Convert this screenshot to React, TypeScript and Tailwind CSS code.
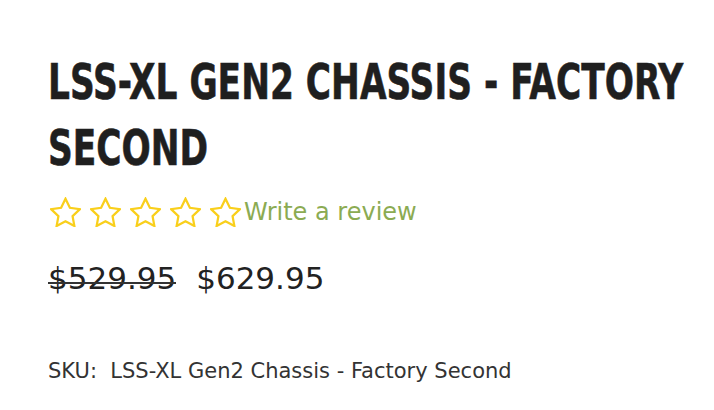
import React from 'react';

const bodyFont = { fontFamily: '"DejaVu Sans", Verdana, sans-serif' };

function StarOutline() {
  return (
    <svg width="31" height="30" viewBox="1.6 1.4 20.8 19.8" fill="none" aria-hidden="true">
      <path
        d="M12 2.4l2.94 6.1 6.7.9-4.9 4.65 1.22 6.65L12 17.5l-5.96 3.2 1.22-6.65L2.36 9.4l6.7-.9z"
        stroke="#f9cf1b"
        strokeWidth="1.5"
        strokeLinejoin="miter"
      />
    </svg>
  );
}

export default function App() {
  return (
    <div className="w-[714px] h-[410px] overflow-hidden bg-white pl-12 pt-[49px]">
      {/* titel: smal & vet, Oswald-achtig */}
      <h1
        className="w-[900px] origin-left scale-x-[0.765] text-[50px] leading-[66px] font-bold uppercase text-[#1f1f1f] [-webkit-text-stroke:0.6px_#1f1f1f]"
        style={{ fontFamily: '"DejaVu Sans Condensed", "DejaVu Sans", sans-serif' }}
      >
        LSS-XL Gen2 Chassis - Factory Second
      </h1>

      <div className="mt-4 flex items-center">
        <div className="ml-[2px] flex gap-[9px]">
          <StarOutline />
          <StarOutline />
          <StarOutline />
          <StarOutline />
          <StarOutline />
        </div>
        <a href="#" className="ml-[3px] text-[24px] leading-[28px] text-[#8bab52]" style={bodyFont}>
          Write a review
        </a>
      </div>

      <div className="mt-[33px] flex items-baseline gap-[20px] text-[31px] leading-[36px] text-[#222]" style={bodyFont}>
        {/* oude prijs, doorgestreept */}
        <span className="relative after:absolute after:left-0 after:right-0 after:top-[22px] after:h-[2px] after:bg-[#333]">
          $529.95
        </span>
        <span>$629.95</span>
      </div>

      <p className="mt-[63px] text-[21px] leading-[24px] text-[#333]" style={bodyFont}>
        SKU:&nbsp; LSS-XL Gen2 Chassis - Factory Second
      </p>
    </div>
  );
}
